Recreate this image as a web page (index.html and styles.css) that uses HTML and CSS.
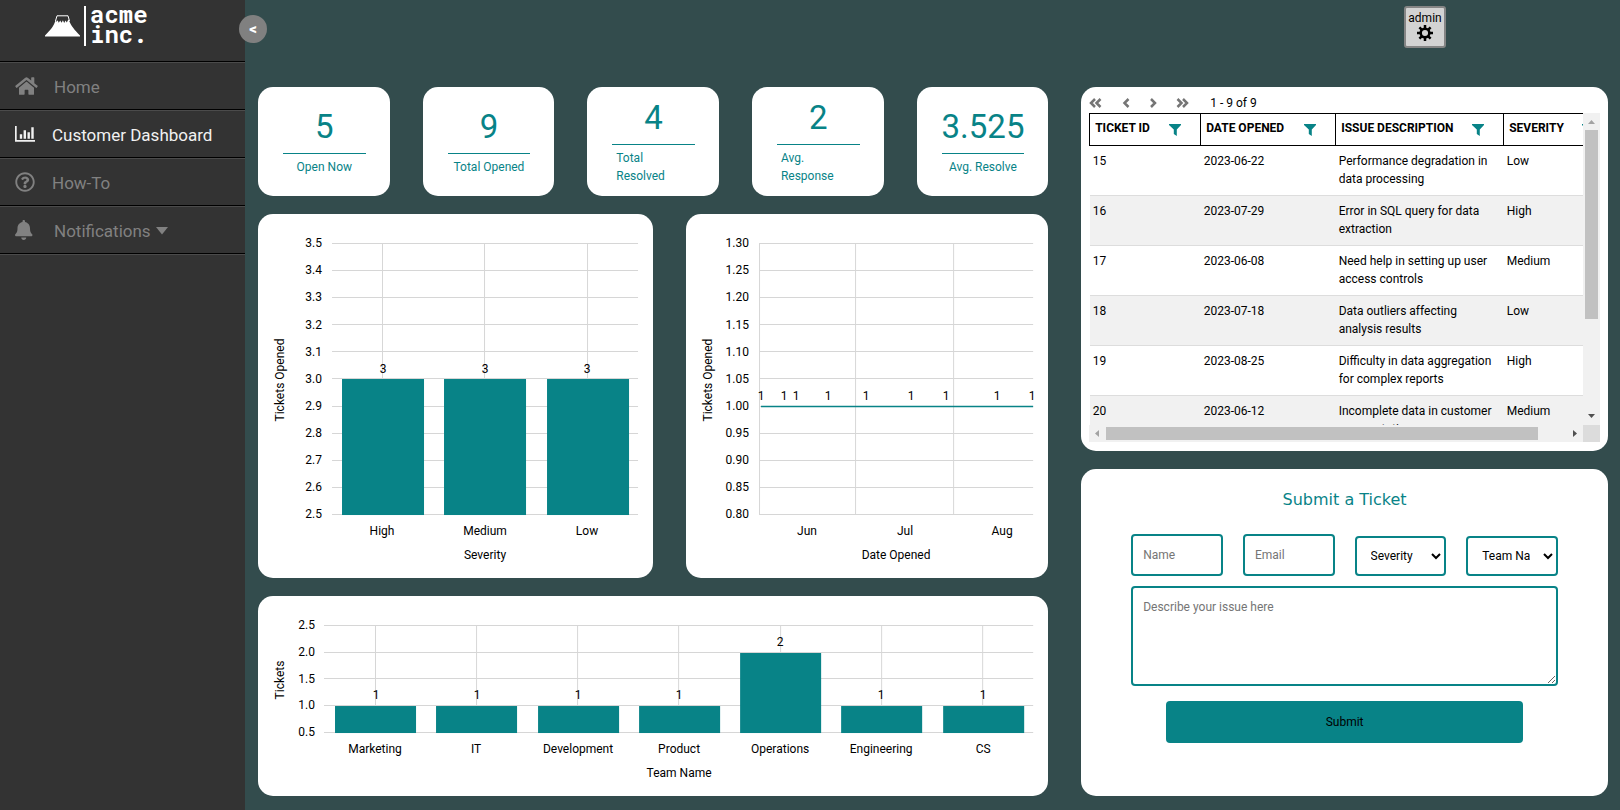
FILE: index.html
```html
<!DOCTYPE html>
<html lang="en">
<head>
<meta charset="utf-8">
<title>Customer Dashboard</title>
<link rel="stylesheet" href="styles.css">
</head>
<body>
<div class="app">
  <aside class="sidebar">
    <div class="logo">
      <svg class="logo-mark" viewBox="0 0 35 22" aria-hidden="true">
        <path class="logo-snow" d="M10.5 6 12 .8h11L24.5 6"/>
        <path class="logo-hill" d="M10.8 4.5l.8 2.5 1-1.800 1.200 2.600 1.400-2.400 1.400 2.400 1.300-2.600 1.300 2.800 1.300-2.600 1.300 2 1-1.800.8-1C26 11 29.500 15 35 20.500V21.500H0V20.500C5.500 15 9 11 10.800 4.500z"/>
      </svg>
      <span class="logo-rule"></span>
      <div class="logo-text">acme<br>inc.</div>
    </div>
    <nav class="nav">
      <a class="nav-item" href="#">
        <svg class="nav-icon wide" viewBox="0 0 576 512" aria-hidden="true"><path d="M280.370 148.260L96 300.110V464a16 16 0 0 0 16 16l112.060-.29a16 16 0 0 0 15.920-16V368a16 16 0 0 1 16-16h64a16 16 0 0 1 16 16v95.640a16 16 0 0 0 16 16.050L464 480a16 16 0 0 0 16-16V300L295.670 148.260a12.190 12.190 0 0 0-15.300 0zM571.600 251.470L488 182.560V44.050a12 12 0 0 0-12-12h-56a12 12 0 0 0-12 12v72.610L318.470 43a48 48 0 0 0-61 0L4.340 251.470a12 12 0 0 0-1.600 16.900l25.500 31A12 12 0 0 0 45.150 301l235.220-193.740a12.190 12.190 0 0 1 15.300 0L530.900 301a12 12 0 0 0 16.900-1.600l25.500-31a12 12 0 0 0-1.700-16.930z"/></svg>
        <span>Home</span>
      </a>
      <a class="nav-item active" href="#" aria-current="page">
        <svg class="nav-icon" viewBox="0 0 20 20" aria-hidden="true"><path d="M0 2h1.700v14H20v1.700H0zM4.800 10.300h2.400v4.400H4.800zM8.600 6.300H11v8.400H8.600zM12.500 8.300h2.400v6.400h-2.400zM16.300 3.300h2.400v11.400h-2.400z"/></svg>
        <span>Customer Dashboard</span>
      </a>
      <a class="nav-item" href="#">
        <svg class="nav-icon" viewBox="0 0 512 512" aria-hidden="true"><path d="M256 8C119.043 8 8 119.083 8 256c0 136.997 111.043 248 248 248s248-111.003 248-248C504 119.083 392.957 8 256 8zm0 448c-110.532 0-200-89.431-200-200 0-110.495 89.472-200 200-200 110.491 0 200 89.471 200 200 0 110.530-89.431 200-200 200zm107.244-255.200c0 67.052-72.421 68.084-72.421 92.863V300c0 6.627-5.373 12-12 12h-45.647c-6.627 0-12-5.373-12-12v-8.659c0-35.745 27.100-50.034 47.579-61.516 17.561-9.845 28.324-16.541 28.324-29.579 0-17.246-21.999-28.693-39.784-28.693-23.189 0-33.894 10.977-48.942 29.969-4.057 5.120-11.460 6.071-16.666 2.124l-27.824-21.098c-5.107-3.872-6.251-11.066-2.644-16.363C184.846 131.491 214.940 112 261.794 112c49.071 0 101.450 38.304 101.450 88.800zM298 368c0 23.159-18.841 42-42 42s-42-18.841-42-42 18.841-42 42-42 42 18.841 42 42z"/></svg>
        <span>How-To</span>
      </a>
      <a class="nav-item" href="#">
        <svg class="nav-icon wide" viewBox="0 0 448 512" preserveAspectRatio="xMinYMid meet" aria-hidden="true"><path d="M224 512c35.320 0 63.970-28.650 63.970-64H160.030c0 35.350 28.650 64 63.970 64zm215.390-149.710c-19.320-20.760-55.470-51.990-55.470-154.290 0-77.700-54.480-139.900-127.940-155.160V32c0-17.670-14.320-32-31.980-32s-31.980 14.330-31.980 32v20.840C118.560 68.100 64.080 130.300 64.080 208c0 102.300-36.150 133.530-55.470 154.290-6 6.450-8.660 14.160-8.610 21.710.11 16.400 12.980 32 32.100 32h383.800c19.120 0 32-15.600 32.100-32 .05-7.550-2.610-15.270-8.610-21.710z"/></svg>
        <span>Notifications</span>
        <svg class="nav-caret" viewBox="0 0 12 8" aria-hidden="true"><path d="M0 0h12L6 7.500z"/></svg>
      </a>
    </nav>
    <button class="collapse" type="button" aria-label="Collapse sidebar">&lt;</button>
  </aside>

  <main class="main">
    <header class="topbar">
      <button class="admin" type="button">
        <span>admin</span>
        <svg class="gear" viewBox="0 0 16 16" aria-hidden="true"><circle cx="8" cy="8" r="4.300"/><path d="M8 0v4M8 12v4M0 8h4M12 8h4M2.400 2.400l2.800 2.800M10.800 10.800l2.800 2.800M2.400 13.600l2.800-2.800M10.800 5.200l2.800-2.800"/></svg>
      </button>
    </header>

    <div class="board">
      <div class="column">
        <section class="stats">
          <div class="card stat"><div class="stat-value">5</div><div class="stat-label">Open Now</div></div>
          <div class="card stat"><div class="stat-value">9</div><div class="stat-label">Total Opened</div></div>
          <div class="card stat"><div class="stat-value">4</div><div class="stat-label">Total Resolved</div></div>
          <div class="card stat"><div class="stat-value">2</div><div class="stat-label">Avg. Response</div></div>
          <div class="card stat"><div class="stat-value">3.525</div><div class="stat-label">Avg. Resolve</div></div>
        </section>

        <section class="charts">
          <div class="card">
            <svg class="chart" viewBox="0 0 395 364" role="img" aria-label="Tickets opened by severity">
              <path class="grid" d="M74 29.500H380M74 56.500H380M74 83.500H380M74 110.500H380M74 137.500H380M74 164.500H380M74 192.500H380M74 219.500H380M74 246.500H380M74 273.500H380M74 300.500H380M124.500 29V301M226.500 29V301M329.500 29V301"/>
              <g class="bars"><rect x="84" y="165" width="82" height="136"/><rect x="186" y="165" width="82" height="136"/><rect x="289" y="165" width="82" height="136"/></g>
              <g class="end"><text x="64" y="33">3.5</text><text x="64" y="60">3.4</text><text x="64" y="87">3.3</text><text x="64" y="115">3.2</text><text x="64" y="142">3.1</text><text x="64" y="169">3.0</text><text x="64" y="196">2.9</text><text x="64" y="223">2.8</text><text x="64" y="250">2.7</text><text x="64" y="277">2.6</text><text x="64" y="304">2.5</text></g>
              <g class="mid"><text x="125" y="159">3</text><text x="227" y="159">3</text><text x="329" y="159">3</text>
              <text x="124" y="321">High</text><text x="227" y="321">Medium</text><text x="329" y="321">Low</text>
              <text x="227" y="345">Severity</text><text transform="translate(26 166) rotate(-90)">Tickets Opened</text></g>
            </svg>
          </div>
          <div class="card">
            <svg class="chart" viewBox="0 0 362 364" role="img" aria-label="Tickets opened by date">
              <path class="grid" d="M73 29.500H347M73 56.500H347M73 83.500H347M73 110.500H347M73 137.500H347M73 164.500H347M73 192.500H347M73 219.500H347M73 246.500H347M73 273.500H347M73 300.500H347M73.500 29V301M169.500 29V301M267.500 29V301"/>
              <path class="line" d="M75 192.500H347"/>
              <g class="end"><text x="63" y="33">1.30</text><text x="63" y="60">1.25</text><text x="63" y="87">1.20</text><text x="63" y="115">1.15</text><text x="63" y="142">1.10</text><text x="63" y="169">1.05</text><text x="63" y="196">1.00</text><text x="63" y="223">0.95</text><text x="63" y="250">0.90</text><text x="63" y="277">0.85</text><text x="63" y="304">0.80</text></g>
              <g class="mid"><text x="75" y="186">1</text><text x="98" y="186">1</text><text x="110" y="186">1</text><text x="142" y="186">1</text><text x="180" y="186">1</text><text x="225" y="186">1</text><text x="260" y="186">1</text><text x="311" y="186">1</text><text x="346" y="186">1</text>
              <text x="121" y="321">Jun</text><text x="219" y="321">Jul</text><text x="316" y="321">Aug</text>
              <text x="210" y="345">Date Opened</text><text transform="translate(26 166) rotate(-90)">Tickets Opened</text></g>
            </svg>
          </div>
        </section>

        <section class="card">
          <svg class="chart" viewBox="0 0 790 200" role="img" aria-label="Tickets by team">
            <path class="grid" d="M66 29.500H775M66 56.500H775M66 82.500H775M66 109.500H775M66 136.500H775M117.500 29V137M218.500 29V137M319.500 29V137M420.500 29V137M522.500 29V137M623.500 29V137M724.500 29V137"/>
            <g class="bars"><rect x="77" y="110" width="81" height="27"/><rect x="178" y="110" width="81" height="27"/><rect x="280" y="110" width="81" height="27"/><rect x="381" y="110" width="81" height="27"/><rect x="482" y="57" width="81" height="80"/><rect x="583" y="110" width="81" height="27"/><rect x="685" y="110" width="81" height="27"/></g>
            <g class="end"><text x="57" y="33">2.5</text><text x="57" y="60">2.0</text><text x="57" y="87">1.5</text><text x="57" y="113">1.0</text><text x="57" y="140">0.5</text></g>
            <g class="mid"><text x="118" y="103">1</text><text x="219" y="103">1</text><text x="320" y="103">1</text><text x="421" y="103">1</text><text x="522" y="50">2</text><text x="623" y="103">1</text><text x="725" y="103">1</text>
            <text x="117" y="157">Marketing</text><text x="218" y="157">IT</text><text x="320" y="157">Development</text><text x="421" y="157">Product</text><text x="522" y="157">Operations</text><text x="623" y="157">Engineering</text><text x="725" y="157">CS</text>
            <text x="421" y="181">Team Name</text><text transform="translate(26 84) rotate(-90)">Tickets</text></g>
          </svg>
        </section>
      </div>

      <div class="column">
        <section class="card tickets">
          <div class="pager">
            <button type="button" aria-label="First page"><svg viewBox="0 0 13 12"><path d="M6 2 2 6 6 10M11.500 2 7.500 6l4 4"/></svg></button>
            <button type="button" aria-label="Previous page"><svg viewBox="0 0 13 12"><path d="M8.500 2 4.500 6 8.500 10"/></svg></button>
            <button type="button" aria-label="Next page"><svg viewBox="0 0 13 12"><path d="M3 2 7 6 3 10"/></svg></button>
            <button type="button" aria-label="Last page"><svg viewBox="0 0 13 12"><path d="M1.500 2 5.500 6 1.500 10M7 2 11 6 7 10"/></svg></button>
            <span class="pager-range">1 - 9 of 9</span>
          </div>
          <div class="scroller">
            <div class="viewport">
              <table class="table">
                <colgroup><col class="c-id"><col class="c-date"><col class="c-issue"><col class="c-sev"></colgroup>
                <thead>
                  <tr>
                    <th scope="col"><div class="th">TICKET ID <svg class="filter" viewBox="0 0 12 12"><path d="M0 0h12v1L7.800 5.500V12L4.800 10V5.500L0 1z"/></svg></div></th>
                    <th scope="col"><div class="th">DATE OPENED <svg class="filter" viewBox="0 0 12 12"><path d="M0 0h12v1L7.800 5.500V12L4.800 10V5.500L0 1z"/></svg></div></th>
                    <th scope="col"><div class="th">ISSUE DESCRIPTION <svg class="filter" viewBox="0 0 12 12"><path d="M0 0h12v1L7.800 5.500V12L4.800 10V5.500L0 1z"/></svg></div></th>
                    <th scope="col"><div class="th">SEVERITY <svg class="filter" viewBox="0 0 12 12"><path d="M0 0h12v1L7.800 5.500V12L4.800 10V5.500L0 1z"/></svg></div></th>
                  </tr>
                </thead>
                <tbody>
                  <tr><td>15</td><td>2023-06-22</td><td>Performance degradation in data processing</td><td>Low</td></tr>
                  <tr><td>16</td><td>2023-07-29</td><td>Error in SQL query for data extraction</td><td>High</td></tr>
                  <tr><td>17</td><td>2023-06-08</td><td>Need help in setting up user access controls</td><td>Medium</td></tr>
                  <tr><td>18</td><td>2023-07-18</td><td>Data outliers affecting analysis results</td><td>Low</td></tr>
                  <tr><td>19</td><td>2023-08-25</td><td>Difficulty in data aggregation for complex reports</td><td>High</td></tr>
                  <tr><td>20</td><td>2023-06-12</td><td>Incomplete data in customer segmentation</td><td>Medium</td></tr>
                </tbody>
              </table>
            </div>
            <div class="bar bar-v">
              <svg class="arrow off" viewBox="0 0 17 17"><path d="M5 11h7L8.500 7z"/></svg>
              <div class="lane"><div class="thumb"></div></div>
              <svg class="arrow" viewBox="0 0 17 17"><path d="M5 6h7l-3.500 4z"/></svg>
            </div>
            <div class="bar bar-h">
              <svg class="arrow off" viewBox="0 0 17 17"><path d="M10 5v7L6 8.500z"/></svg>
              <div class="lane"><div class="thumb"></div></div>
              <svg class="arrow" viewBox="0 0 17 17"><path d="M7 5v7l4-3.500z"/></svg>
            </div>
            <div class="corner"></div>
          </div>
        </section>

        <section class="card submit">
          <h2 class="submit-title">Submit a Ticket</h2>
          <form class="form">
            <div class="fields">
              <input class="field" type="text" placeholder="Name" aria-label="Name">
              <input class="field" type="email" placeholder="Email" aria-label="Email">
              <select class="field select" aria-label="Severity"><option>Severity</option><option>High</option><option>Medium</option><option>Low</option></select>
              <select class="field select" aria-label="Team Name"><option>Team Name</option><option>Marketing</option><option>IT</option><option>Development</option></select>
            </div>
            <textarea class="field message" placeholder="Describe your issue here" aria-label="Describe your issue"></textarea>
            <button class="send" type="submit">Submit</button>
          </form>
        </section>
      </div>
    </div>
  </main>
</div>
</body>
</html>
```
FILE: styles.css
```css
:root {
  --teal: #088387;
  --ground: #334c4d;
  --side: #333333;
  --muted: #818181;
}

* { box-sizing: border-box; }

body {
  margin: 0;
  background: var(--ground);
  font: 12px/18px Roboto, Arial, sans-serif;
  color: #000;
}

button, input, select, textarea { font: inherit; }

.app { display: flex; min-height: 100vh; }

/* Sidebar */
.sidebar {
  position: relative;
  flex: 0 0 245px;
  background: var(--side);
}

.logo {
  display: flex;
  align-items: flex-start;
  height: 62px;
  padding: 4px 0 0 45px;
  border-bottom: 1px solid #000;
}

.logo-mark { width: 35px; height: 22px; margin: 11px 4px 0 0; }
.logo-hill { fill: #fff; }
.logo-snow { fill: none; stroke: #fff; stroke-width: 1; }
.logo-rule { width: 2px; height: 40px; margin: 2px 4px 0 0; background: #fff; }

.logo-text {
  color: #fff;
  font: bold 24px/20px "Roboto Mono", "DejaVu Sans Mono", monospace;
}

.nav { border-bottom: 1px solid #4b4b4b; }

.nav-item {
  display: flex;
  align-items: center;
  height: 48px;
  padding: 1px 0 0 15px;
  border-top: 1px solid #4b4b4b;
  border-bottom: 1px solid #000;
  color: var(--muted);
  font-size: 17px;
  text-decoration: none;
}

.nav-item.active { color: #f1f1f1; }
.nav-icon { width: 20px; height: 20px; margin: 0 17px 2px 0; fill: currentColor; }
.nav-icon.wide { width: 23px; margin-right: 16px; }
.nav-caret { width: 12px; height: 8px; margin-left: 5px; fill: currentColor; }

.collapse {
  position: absolute;
  top: 15px;
  right: -22px;
  width: 28px;
  height: 28px;
  padding: 0;
  border: 0;
  border-radius: 50%;
  background: #808080;
  color: #fff;
  font-size: 15px;
  font-weight: 900;
}

/* Main area */
.main { flex: 1; min-width: 0; padding: 0 12px 14px 13px; display: flex; flex-direction: column; }

.topbar { display: flex; justify-content: flex-end; height: 87px; padding: 6px 162px 0 0; }

.admin {
  display: flex;
  flex-direction: column;
  align-items: center;
  width: 42px;
  height: 42px;
  padding: 1px 0 0;
  border: 2px solid #858585;
  border-radius: 3px;
  background: #d3d3d3;
  color: #000;
}

.gear { width: 16px; height: 16px; margin-top: -2px; fill: none; stroke: #000; stroke-width: 2.5; flex: none; }

.board { flex: 1; display: grid; grid-template-columns: 3fr 2fr; gap: 33px; }
.column { display: flex; flex-direction: column; gap: 18px; min-width: 0; }
.card { border-radius: 15px; background: #fff; overflow: hidden; }

.stats { display: grid; grid-template-columns: repeat(5, 1fr); gap: 33px; }

.stat {
  display: flex;
  flex-direction: column;
  align-items: center;
  justify-content: center;
  min-height: 109px;
  padding: 0 24px 0 25px;
  color: var(--teal);
}

.stat-value {
  align-self: stretch;
  padding-bottom: 7px;
  border-bottom: 1px solid var(--teal);
  margin-bottom: 4px;
  font-size: 33px;
  line-height: 39px;
  text-align: center;
}

.stat-label { padding: 0 4px; }

/* Charts */
.charts { display: grid; grid-template-columns: 12fr 11fr; gap: 33px; }
.chart { display: block; width: 100%; height: auto; font-size: 12px; }
.grid { fill: none; stroke: rgba(0, 0, 0, .16); }
.bars { fill: var(--teal); }
.line { fill: none; stroke: var(--teal); stroke-width: 1.5; }
.end { text-anchor: end; }
.mid { text-anchor: middle; }

/* Ticket table */
.tickets { padding: 6px 8px 9px; }
.pager { display: flex; align-items: center; height: 20px; }

.pager button {
  display: flex;
  width: 13px;
  margin-right: 15px;
  padding: 0;
  border: 0;
  background: none;
}

.pager button:first-child { margin-right: 18px; }

.pager svg { width: 13px; height: 12px; fill: none; stroke: #757575; stroke-width: 2.5; }
.pager-range { margin-left: 6px; }

.scroller { display: grid; grid-template-columns: minmax(0, 1fr) 17px; }
.viewport { height: 312px; overflow: hidden; }

.table { width: 524px; table-layout: fixed; border-collapse: collapse; }
.c-id { width: 111px; }
.c-date { width: 135px; }
.c-issue { width: 168px; }
.c-sev { width: 110px; }

.table th { height: 32px; padding: 0; border: 1px solid #000; text-align: left; }

.th { display: flex; justify-content: space-between; align-items: center; padding: 0 19px 3px 5px; }
.filter { width: 12px; height: 12px; margin-top: 4px; fill: var(--teal); flex: none; }

.table td { height: 50px; padding: 6px 3px 6px; border-bottom: 1px solid #ddd; vertical-align: top; }
.table tbody tr:nth-child(even) { background: #f1f1f1; }

.bar { display: flex; background: #f1f1f1; }
.bar-v { flex-direction: column; }
.lane { flex: 1; display: flex; }
.arrow { width: 17px; height: 17px; fill: #505050; flex: none; }
.arrow.off { fill: #a3a3a3; }
.thumb { background: #c1c1c1; }
.bar-v .thumb { width: 13px; height: 68%; margin: 0 2px; }
.bar-h .thumb { width: 94%; height: 13px; margin: 2px 0; }
.corner { background: #dcdcdc; }

/* Ticket form */
.submit { flex: 1; padding: 20px 50px; }

.submit-title {
  margin: 0 0 24px;
  padding-top: 1px;
  color: var(--teal);
  font: 16px/20px Verdana, "DejaVu Sans", sans-serif;
  text-align: center;
}

.form { display: flex; flex-direction: column; }
.fields { display: grid; grid-template-columns: repeat(4, minmax(0, 1fr)); gap: 20px; align-items: end; }

.field {
  width: 100%;
  min-width: 0;
  height: 42px;
  padding: 10px;
  border: 2px solid var(--teal);
  border-radius: 4px;
  background: #fff;
  color: #000;
}

.field::placeholder { color: #757575; }
.select { height: 40px; }
.message { height: 100px; margin: 10px 0 15px; }

.send {
  height: 42px;
  margin: 0 35px;
  border: 0;
  border-radius: 4px;
  background: var(--teal);
  color: #000;
}
```
